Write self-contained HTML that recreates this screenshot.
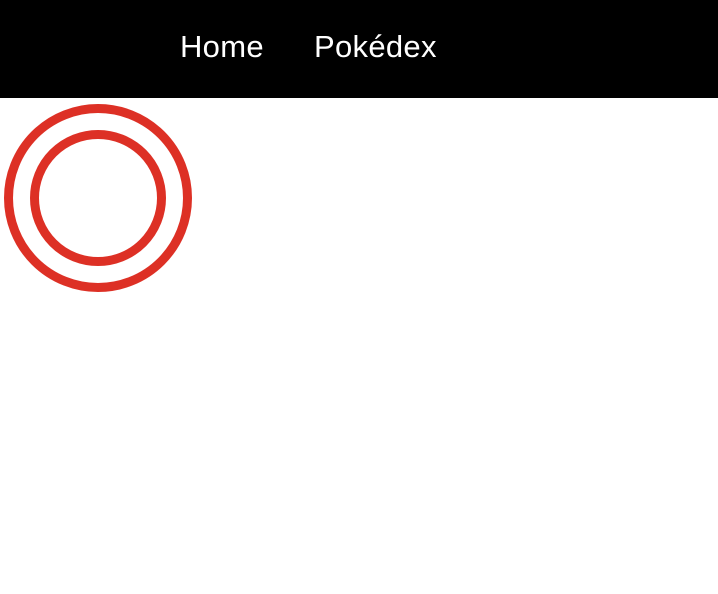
<!DOCTYPE html>
<html><head><style>
html,body{margin:0;padding:0;background:#fff;width:718px;height:594px;overflow:hidden}
.bar{position:absolute;left:0;top:0;width:718px;height:98px;background:#000}
.t{position:absolute;top:27px;color:#fff;font-family:"Liberation Sans",sans-serif;font-size:31px;letter-spacing:0.3px;line-height:40px;white-space:nowrap}
</style></head><body>
<div class="bar"></div>
<div class="t" style="left:180px">Home</div>
<div class="t" style="left:314px">Pokédex</div>
<svg style="position:absolute;left:0;top:98px" width="200" height="200">
<circle cx="98" cy="100" r="89.5" fill="none" stroke="#dd3025" stroke-width="9"/>
<circle cx="98" cy="100" r="63.5" fill="none" stroke="#dd3025" stroke-width="9"/>
</svg>
</body></html>
